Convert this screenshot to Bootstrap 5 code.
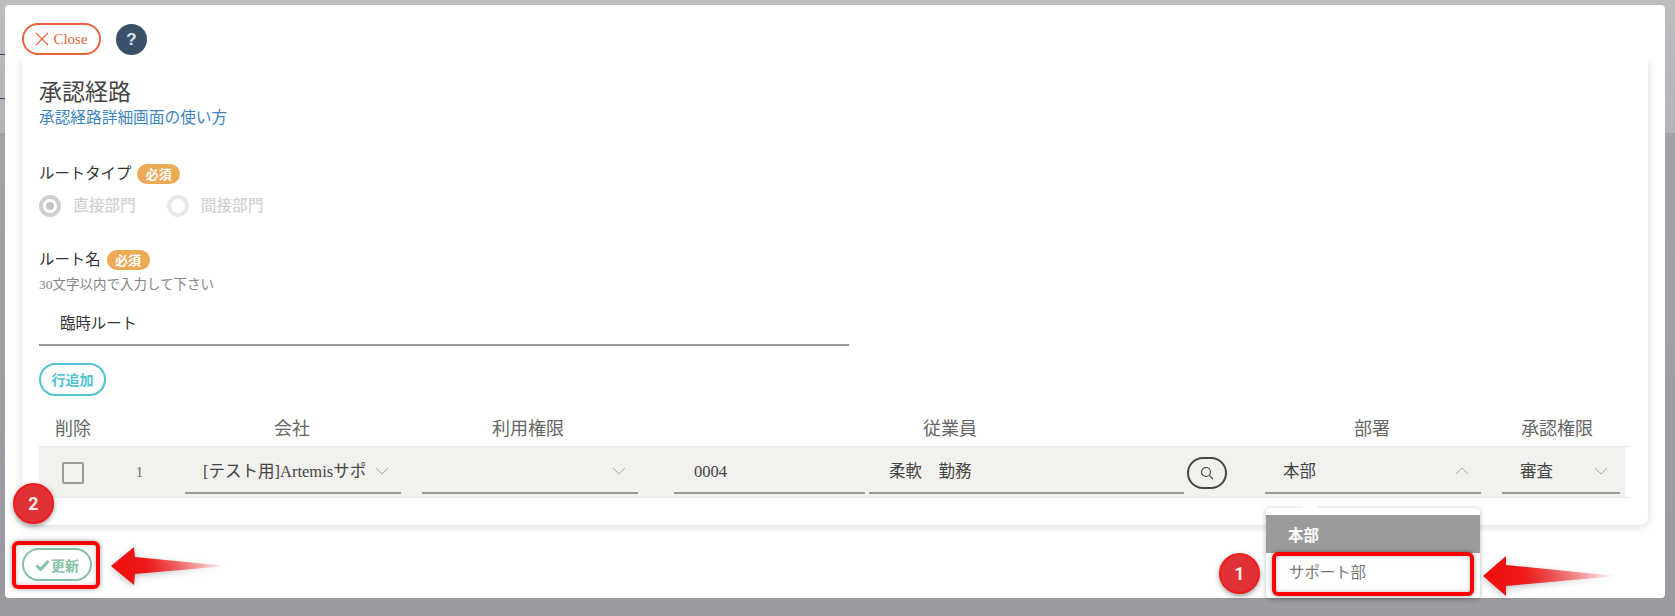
<!DOCTYPE html>
<html lang="ja">
<head>
  <meta charset="UTF-8" />
  <meta name="viewport" content="width=device-width, initial-scale=1.0" />
  <title>承認経路</title>
  <link href="https://cdn.jsdelivr.net/npm/bootstrap@5.3.0/dist/css/bootstrap.min.css" rel="stylesheet">
  <style>
    html, body { height: 616px; overflow: hidden; }
    body {
      background: linear-gradient(to bottom, #bdbdc0 0, #b4b4b8 133px, #a2a2a7 133px, #9a9aa0 100%);
      font-family: "Liberation Serif", "Noto Sans CJK JP", serif;
      color: #333;
      padding: 5px 10px 18px 5px;
    }
    .route-modal {
      position: relative;
      height: 593px;
      background: #fff;
      border-radius: 4px;
      padding: 18px 17px 0;
    }
    .close-pill {
      width: 79px; height: 32px;
      border: 2px solid #e8643a; border-radius: 16px;
      color: #e8643a; background: #fff;
      font-size: 15px; line-height: 1; padding: 0;
      font-family: "Liberation Serif", serif;
    }
    .help-dot {
      width: 31px; height: 31px; border-radius: 50%;
      background: #3a5069; color: #dfe4ea; margin-left: -1px;
      font: bold 17px/31px "Liberation Sans", sans-serif; text-align: center;
    }
    .route-panel {
      height: 466px; margin-top: 4px;
      background: #fff; border-radius: 0 0 8px 8px;
      box-shadow: 0 2px 8px rgba(0,0,0,.14);
      clip-path: inset(0 -12px -12px -12px);
      padding: 18px 0 0 17px;
    }
    .panel-title { font-size: 23px; line-height: 31px; font-weight: 400; color: #444; margin: 0; }
    .howto-link { display: block; font-size: 15.7px; line-height: 20px; color: #3d85c0; text-decoration: none; }
    .field-label { font-size: 15.4px; line-height: 22px; color: #333; }
    .label-set { display: flex; align-items: center; gap: 6px; }
    .must-tag {
      width: 43px; height: 20px; border-radius: 10px;
      background: #ecaa55; color: #fff;
      font-size: 13px; font-weight: 700; line-height: 20px; text-align: center;
      font-family: "Noto Sans CJK JP", sans-serif;
    }
    .radio-set { display: flex; align-items: center; gap: 12px; margin-top: 9px; }
    .radio-dot { width: 22px; height: 22px; border-radius: 50%; border: 4px solid #cfcfcf; background: #fff; display: flex; align-items: center; justify-content: center; }
    .radio-dot.off { border-color: #e8e8e8; }
    .radio-dot i { width: 8px; height: 8px; border-radius: 50%; background: #c4c4c4; }
    .radio-text { font-size: 15.7px; color: #d2d2d2; font-weight: 500; margin-right: 19px; }
    .hint-text { font-size: 13.5px; line-height: 18px; color: #858585; margin-top: 5px; }
    .name-field { width: 810px; height: 52px; border-bottom: 2px solid #999; padding: 18px 0 0 21px; font-size: 15.4px; line-height: 24px; color: #333; }
    .add-pill {
      width: 67px; height: 33px; padding: 0; margin-top: 17px;
      border: 2px solid #4fc3cf; border-radius: 17px; background: #fff;
      color: #4fc3cf; font-size: 14px; font-weight: 700; line-height: 1;
      font-family: "Noto Sans CJK JP", sans-serif;
    }
    .head-row { height: 50px; padding-top: 21px; display: flex; font-size: 18px; line-height: 24px; color: #666; text-align: center; }
    .head-row > div { flex: none; }
    .h-del { width: 68px; } .h-comp { width: 370px; } .h-right { width: 102px; } .h-emp { width: 742px; } .h-dept { width: 102px; }
    .head-row .h-auth { width: 190px; padding-left: 98px; text-align: left; white-space: nowrap; }
    .data-row {
      width: 1592px; height: 52px;
      border-top: 1px solid #e6eaf2; border-bottom: 1px solid #e6eaf2;
      background: linear-gradient(to right, #f2f1ee 1586px, #fff 1586px);
      display: flex; font-size: 16.5px; color: #444;
    }
    .tick-box { width: 22px; height: 22px; border: 2px solid #999; border-radius: 2px; margin: 15px 0 0 23px; background: #f2f1ee; }
    .row-no { width: 79px; text-align: center; font-size: 14px; line-height: 52px; color: #666; margin-left: 16px; }
    .line-field {
      height: 47px; padding: 13px 0 0 18px; line-height: 24px;
      border-bottom: 2px solid #999;
      display: flex; justify-content: space-between; white-space: nowrap; overflow: hidden;
    }
    .line-field svg { flex: none; margin: 7px 12px 0 0; }
    .search-pill { width: 40px; height: 32px; padding: 0; margin-top: 10px; border: 2px solid #444; border-radius: 16px; background: transparent; display: flex; align-items: center; justify-content: center; }
    .dept-menu {
      position: absolute; left: 1261px; top: 503px; width: 214px; height: 90px;
      background: #fff; border-radius: 4px; padding-top: 7px;
      box-shadow: 0 1px 5px rgba(0,0,0,.28);
    }
    .dept-menu::before {
      content: ""; position: absolute; left: 38px; top: -6px; width: 12px; height: 12px;
      background: #fff; transform: rotate(45deg);
    }
    .dept-current { height: 38px; background: #9b9b9b; color: #fff; font-weight: 700; font-size: 15.4px; line-height: 38px; padding-left: 22px; position: relative; font-family: "Noto Sans CJK JP", sans-serif; }
    .dept-option { padding-left: 23px; font-size: 15.4px; line-height: 40px; color: #777; }
    .save-pill {
      position: absolute; left: 17px; top: 543px; width: 70px; height: 33px; padding: 0;
      border: 2px solid #85c1a5; border-radius: 17px; background: #fff;
      color: #85c1a5; font-size: 14px; font-weight: 700; line-height: 1;
      font-family: "Noto Sans CJK JP", sans-serif;
      display: flex; align-items: center; justify-content: center; gap: 1px;
    }
    .mark-box { position: absolute; border: 4px solid #f00; border-radius: 6px; box-shadow: 0 0 5px rgba(0,0,0,.4), inset 0 0 5px rgba(0,0,0,.25); }
    .mark-num {
      position: absolute; width: 41px; height: 41px; border-radius: 50%;
      background: #e03236; border: 2px solid #f01c1c; color: #fde8e8;
      font: bold 18px/37px Roboto, "Liberation Sans", sans-serif; text-align: center;
      box-shadow: 0 2px 5px rgba(0,0,0,.4);
    }
    .mark-arrow { position: absolute; filter: drop-shadow(0 2px 3px rgba(0,0,0,.25)); }
    .backdrop-line { position: absolute; left: 0; width: 5px; height: 1px; background: #3a4c63; }
  </style>
</head>
<body>
  <div class="backdrop-line" style="top: 54px"></div>
  <div class="backdrop-line" style="top: 98px"></div>

  <div class="route-modal">
    <div class="d-flex align-items-center gap-3">
      <button class="close-pill d-flex align-items-center justify-content-center gap-1">
        <svg width="14" height="14" viewBox="0 0 14 14"><path d="M1 1l12 12M13 1L1 13" stroke="#e8643a" stroke-width="1.2" fill="none"/></svg>Close
      </button>
      <div class="help-dot">?</div>
    </div>

    <div class="route-panel">
      <h1 class="panel-title">承認経路</h1>
      <a class="howto-link" href="#">承認経路詳細画面の使い方</a>

      <div class="label-set" style="margin-top: 35px">
        <span class="field-label">ルートタイプ</span><span class="must-tag">必須</span>
      </div>
      <div class="radio-set">
        <span class="radio-dot"><i></i></span><span class="radio-text">直接部門</span>
        <span class="radio-dot off"></span><span class="radio-text">間接部門</span>
      </div>

      <div class="label-set" style="margin-top: 31px">
        <span class="field-label">ルート名</span><span class="must-tag">必須</span>
      </div>
      <div class="hint-text">30文字以内で入力して下さい</div>
      <div class="name-field">臨時ルート</div>
      <button class="add-pill d-block">行追加</button>

      <div class="head-row">
        <div class="h-del">削除</div>
        <div class="h-comp">会社</div>
        <div class="h-right">利用権限</div>
        <div class="h-emp">従業員</div>
        <div class="h-dept">部署</div>
        <div class="h-auth">承認権限</div>
      </div>

      <div class="data-row">
        <div class="tick-box"></div>
        <div class="row-no">1</div>
        <div class="line-field" style="width: 216px; margin-left: 6px">[テスト用]Artemisサポ
          <svg width="14" height="8" viewBox="0 0 14 8"><path d="M1 1l6 6 6-6" stroke="#aaa" fill="none"/></svg>
        </div>
        <div class="line-field" style="width: 216px; margin-left: 21px">
          <span></span><svg width="14" height="8" viewBox="0 0 14 8"><path d="M1 1l6 6 6-6" stroke="#aaa" fill="none"/></svg>
        </div>
        <div class="line-field" style="width: 191px; margin-left: 36px; padding-left: 20px">0004</div>
        <div class="line-field" style="width: 315px; margin-left: 4px; padding-left: 20px">柔軟　勤務</div>
        <button class="search-pill" style="margin-left: 3px">
          <svg width="14" height="14" viewBox="0 0 14 14"><circle cx="6" cy="6" r="4.5" stroke="#444" stroke-width="1.2" fill="none"/><path d="M9.3 9.3l3.7 3.7" stroke="#444" stroke-width="1.2"/></svg>
        </button>
        <div class="line-field" style="width: 216px; margin-left: 38px">本部
          <svg width="14" height="8" viewBox="0 0 14 8"><path d="M1 7l6-6 6 6" stroke="#aaa" fill="none"/></svg>
        </div>
        <div class="line-field" style="width: 118px; margin-left: 21px">審査
          <svg width="14" height="8" viewBox="0 0 14 8"><path d="M1 1l6 6 6-6" stroke="#aaa" fill="none"/></svg>
        </div>
      </div>
    </div>

    <button class="save-pill">
      <svg width="15" height="12" viewBox="0 0 15 12"><path d="M1.5 6.5l4 4 8-8.5" stroke="#85c1a5" stroke-width="3" fill="none"/></svg>更新
    </button>

    <div class="dept-menu">
      <div class="dept-current">本部</div>
      <div class="dept-option">サポート部</div>
    </div>

    <div class="mark-box" style="left: 7px; top: 536px; width: 88px; height: 48px"></div>
    <div class="mark-box" style="left: 1267px; top: 547px; width: 202px; height: 44px"></div>
    <div class="mark-num" style="left: 8px; top: 478px">2</div>
    <div class="mark-num" style="left: 1214px; top: 548px">1</div>

    <svg class="mark-arrow" style="left: 105px; top: 541px" width="118" height="40" viewBox="0 0 118 40">
      <defs><linearGradient id="arrowFade"><stop offset="0" stop-color="#f20d0d"/><stop offset=".3" stop-color="#ee1a1a"/><stop offset="1" stop-color="#f00" stop-opacity="0"/></linearGradient></defs>
      <path d="M1 20L24 1l1 10 92 9-92 8-1 11z" fill="url(#arrowFade)"/>
    </svg>
    <svg class="mark-arrow" style="left: 1477px; top: 550px" width="136" height="42" viewBox="0 0 136 42">
      <defs><linearGradient id="arrowFade2"><stop offset="0" stop-color="#f20d0d"/><stop offset=".3" stop-color="#ee1a1a"/><stop offset="1" stop-color="#f00" stop-opacity="0"/></linearGradient></defs>
      <path d="M1 21L24 1v9l111 11-111 10v10z" fill="url(#arrowFade2)"/>
    </svg>
  </div>
  <script src="https://cdn.jsdelivr.net/npm/bootstrap@5.3.0/dist/js/bootstrap.bundle.min.js"></script>
</body>
</html>
